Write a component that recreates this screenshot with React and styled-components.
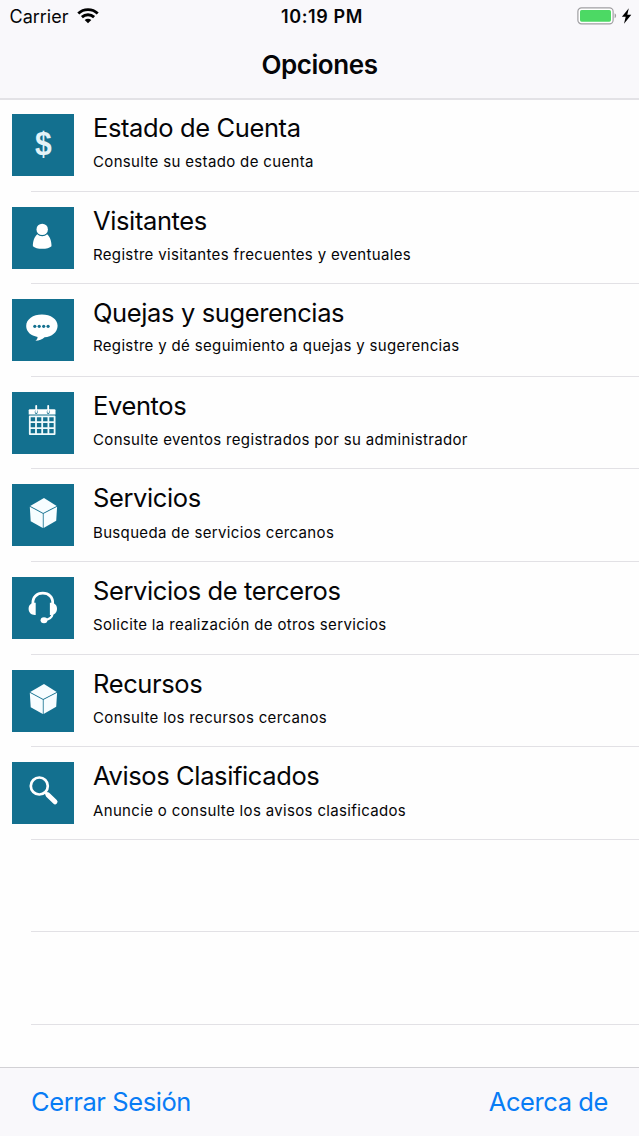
import React from "react";
import styled, { createGlobalStyle } from "styled-components";

const opciones = [
  { icon: "dollar", title: "Estado de Cuenta", detail: "Consulte su estado de cuenta" },
  { icon: "person", title: "Visitantes", detail: "Registre visitantes frecuentes y eventuales" },
  { icon: "bubble", title: "Quejas y sugerencias", detail: "Registre y dé seguimiento a quejas y sugerencias", lift: 1 },
  { icon: "calendar", title: "Eventos", detail: "Consulte eventos registrados por su administrador" },
  { icon: "cube", title: "Servicios", detail: "Busqueda de servicios cercanos" },
  { icon: "headset", title: "Servicios de terceros", detail: "Solicite la realización de otros servicios" },
  { icon: "cube", title: "Recursos", detail: "Consulte los recursos cercanos" },
  { icon: "search", title: "Avisos Clasificados", detail: "Anuncie o consulte los avisos clasificados" },
];

const DollarSign = styled.text`
  font-family: "Liberation Sans", sans-serif;
  font-size: 30px;
  font-weight: 700;
  fill: #e4f3f8;
`;

const icons = {
  dollar: (
    <DollarSign x="31.3" y="37.6" textAnchor="middle" transform="scale(1 1.1)">$</DollarSign>
  ),
  person: (
    <>
      <circle cx="30.2" cy="22.4" r="5.7" />
      <path d="M25.3 27.2C27.6 29.8 32.8 29.8 35.1 27.2C37.9 29.4 39.7 34.5 39.5 39.2C36.5 42.6 23.9 42.6 20.9 39.2C20.7 34.5 22.5 29.4 25.3 27.2Z" />
    </>
  ),
  bubble: (
    <>
      <path d="M29.9 15.6C38.8 15.6 45.6 20.4 45.6 26.8C45.6 33.4 39.6 37.8 32.6 38.3C30.2 40.4 27.2 41.6 23.4 41.8C24.9 40.5 25.6 39.3 25.6 37.9C18.8 36.8 14.2 32.6 14.2 27C14.2 20.4 21 15.6 29.9 15.6Z" />
      <g fill="#13708f">
        <circle cx="22.8" cy="27.3" r="1.6" />
        <circle cx="27.2" cy="27.3" r="1.6" />
        <circle cx="31.7" cy="27.3" r="1.6" />
        <circle cx="36.1" cy="27.3" r="1.6" />
      </g>
    </>
  ),
  calendar: (
    <>
      <path d="M17.8 17.2H42.4Q43.5 17.2 43.5 18.3V22.4H16.7V18.3Q16.7 17.2 17.8 17.2Z" />
      <path d="M24.2 19.4V20.6M36.2 19.4V20.6" stroke="#13708f" strokeWidth="2.8" strokeLinecap="round" />
      <path d="M24.2 13.8V20M36.2 13.8V20" stroke="#fff" strokeWidth="1.8" strokeLinecap="round" />
      <path
        d="M17.8 24.3H42.6V42.1H17.8ZM24 24.3V42.1M30.2 24.3V42.1M36.4 24.3V42.1M17.8 30.2H42.6M17.8 36.2H42.6"
        fill="none"
        stroke="#f0fafc"
        strokeWidth="1.8"
        strokeLinejoin="round"
      />
    </>
  ),
  cube: (
    <g fill="#f7fdff">
      <path d="M32 14.1L44.7 21.9L31.2 28.9L18.2 21.9Z" />
      <path d="M17.8 22.7L30.8 29.7V44.1L18.7 37.3Z" />
      <path d="M45.1 22.7L31.6 29.7V44.1L44.2 36.8Z" />
    </g>
  ),
  headset: (
    <>
      <path d="M20.9 27C20.4 19.8 24.9 16.2 30.8 16.2C36.7 16.2 41.2 19.8 40.7 27" fill="none" stroke="#fff" strokeWidth="2.8" />
      <path d="M23.7 25.8V37.9C19.3 38.3 16.6 35.8 16.6 31.8C16.6 27.9 19.3 25.4 23.7 25.8Z" />
      <path d="M37.9 25.8V37.9C42.3 38.3 45 35.8 45 31.8C45 27.9 42.3 25.4 37.9 25.8Z" />
      <path d="M40.6 37C40 40 37.4 42.3 33 43" fill="none" stroke="#fff" strokeWidth="2.2" />
      <ellipse cx="32" cy="43.3" rx="3.4" ry="3" />
    </>
  ),
  search: (
    <>
      <circle cx="27.3" cy="24" r="8.5" fill="none" stroke="#fff" strokeWidth="2.7" />
      <path d="M33 30.2L36 32.8" stroke="#fff" strokeWidth="3" />
      <path d="M36 33L43 39.8" stroke="#fff" strokeWidth="5" strokeLinecap="round" />
    </>
  ),
};

function Opcion({ icon, title, detail, lift }) {
  return (
    <Row>
      <Tile>
        <svg width="62" height="62" viewBox="0 0 62 62" fill="#fff">{icons[icon]}</svg>
      </Tile>
      <Texts>
        <Title>{title}</Title>
        <Detail $lift={lift}>{detail}</Detail>
      </Texts>
    </Row>
  );
}

function App() {
  return (
    <>
      <GlobalStyle />
      <Screen>
        <Header>
          <StatusBar>
            <Carrier>
              Carrier
              <svg width="22" height="16" viewBox="0 0 22 16" fill="none" stroke="#000" strokeWidth="2.9">
                <path d="M1.3 5.5C6.7 0.3 15.3 0.3 20.7 5.5" />
                <path d="M4.9 9.1C8.4 5.9 13.6 5.9 17.1 9.1" />
                <path d="M11 15.3L7.7 12C9.5 10.4 12.5 10.4 14.3 12Z" fill="#000" stroke="none" />
              </svg>
            </Carrier>
            <Clock>10:19 PM</Clock>
            <Power>
              <svg width="55" height="18" viewBox="0 0 55 18">
                <rect x="0.9" y="0.8" width="35.2" height="16" rx="3.6" fill="#fff" stroke="#a09fa2" strokeWidth="1.2" />
                <rect x="3" y="2.9" width="31" height="11.8" rx="1.6" fill="#4cd964" />
                <path d="M37.6 6.2C39.6 7 39.6 10.4 37.6 11.2Z" fill="#a09fa2" />
                <path d="M51.8 1.2L44.9 9.8H48.7L47 16.8L54.3 7.8H50.3Z" fill="#000" />
              </svg>
            </Power>
          </StatusBar>
          <Heading>Opciones</Heading>
        </Header>
        <List>
          {opciones.map((opcion) => (
            <Opcion key={opcion.title} {...opcion} />
          ))}
          <Row />
          <Row />
        </List>
        <Footer>
          <Action>Cerrar Sesión</Action>
          <Action>Acerca de</Action>
        </Footer>
      </Screen>
    </>
  );
}

export default App;

const GlobalStyle = createGlobalStyle`
  body {
    margin: 0;
    background: #fefefe;
    font-family: Inter, "Liberation Sans", sans-serif;
    color: #050507;
  }
`;

const Screen = styled.div`
  display: flex;
  flex-direction: column;
  width: 639px;
  height: 1136px;
  overflow: hidden;
`;

const Header = styled.header`
  box-sizing: border-box;
  height: 100px;
  flex-shrink: 0;
  background: #f9f8fb;
  border-bottom: 2px solid #e3e2e6;
`;

const StatusBar = styled.div`
  display: grid;
  grid-template-columns: 1fr auto 1fr;
  align-items: center;
  height: 32px;
  padding: 0 7px 0 9.5px;
`;

const Carrier = styled.div`
  display: flex;
  align-items: center;
  gap: 8.5px;
  font-size: 18px;
`;

const Clock = styled.div`
  padding-left: 2.5px;
  font-size: 18px;
  font-weight: 600;
  letter-spacing: 0.6px;
`;

const Power = styled.div`
  display: flex;
  justify-content: flex-end;
`;

const Heading = styled.h1`
  margin: 16px 0 0;
  font-size: 26px;
  line-height: 34px;
  font-weight: 600;
  letter-spacing: -0.45px;
  text-align: center;
`;

const List = styled.main`
  flex: 1;
  margin-top: -1px;
`;

const Row = styled.section`
  box-sizing: border-box;
  display: flex;
  height: 92.61px;
  padding: 15px 0 0 12px;
  background: linear-gradient(#e2e1e5, #e2e1e5) 31px 100% / 100% 1px no-repeat;
`;

const Tile = styled.div`
  width: 62px;
  height: 62px;
  flex-shrink: 0;
  background: #13708f;

  svg {
    display: block;
  }
`;

const Texts = styled.div`
  padding-left: 19px;
  white-space: nowrap;
`;

const Title = styled.h2`
  margin: -2px 0 0;
  font-size: 25.5px;
  line-height: 32px;
  font-weight: 400;
  letter-spacing: -0.38px;
`;

const Detail = styled.p`
  margin: ${(props) => (props.$lift ? 7 : 8.4)}px 0 0;
  font-size: 15px;
  line-height: 20px;
  letter-spacing: 0.34px;
`;

const Footer = styled.footer`
  box-sizing: border-box;
  display: flex;
  justify-content: space-between;
  align-items: center;
  height: 69px;
  padding: 0 31px 1.5px;
  background: #f9f8fb;
  border-top: 1.5px solid #d2d1d5;
`;

const Action = styled.button`
  padding: 0;
  border: 0;
  background: none;
  font: inherit;
  font-size: 25.5px;
  letter-spacing: -0.42px;
  color: #087cf5;
`;
